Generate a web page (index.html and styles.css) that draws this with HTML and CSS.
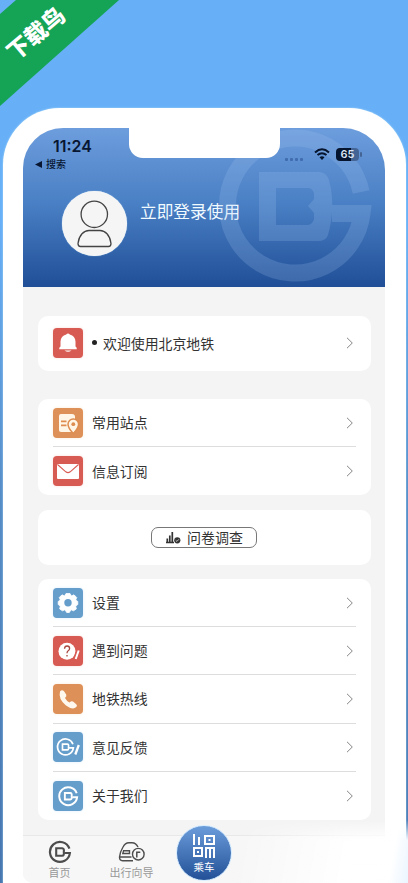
FILE: index.html
```html
<!DOCTYPE html>
<html lang="zh-CN">
<head>
<meta charset="utf-8">
<title>北京地铁</title>
<link rel="stylesheet" href="styles.css">
</head>
<body>
<svg width="0" height="0" class="defs">
  <symbol id="chev" viewBox="0 0 8 12"><path d="M1 .8 6.3 6 1 11.2" fill="none" stroke="#858585" stroke-width="1"/></symbol>
  <symbol id="metro" viewBox="0 0 24 24"><path d="M21.4 8.6A10 10 0 1 0 21.9 13H16.5" fill="none" stroke="currentColor" stroke-width="2.2"/><path d="M8.2 8.3H14.2Q16.4 8.3 15.8 12Q16.4 15.7 14.2 15.7H8.2Z" fill="none" stroke="currentColor" stroke-width="2.1"/></symbol>
</svg>
<div class="ribbon"><svg width="120" height="108"><path d="M16 0H119L0 106V14Z" fill="#15a455"/></svg><span>下载鸟</span></div>
<main class="phone">
  <div class="screen">
    <header class="hero">
      <svg class="watermark" width="156" height="154" viewBox="217 130 156 154"><path fill="none" stroke="#a6c5ef" stroke-width="17" d="M361.1 193A67.5 67.5 0 1 0 362 214.5H332"/><path fill="#a6c5ef" fill-rule="evenodd" d="M259 173H320Q327 174 329 181Q336 207 328 236Q326 242 318 242H259ZM276 189V226H308Q313 225 314 220V214L308 207 314 200V194Q312 189 308 189Z"/></svg>
      <div class="notch"></div>
      <div class="status">
        <div class="clock"><b>11:24</b><small><svg width="8" height="7"><path d="M0 3.5 7 0V7Z" fill="#081632"/></svg>搜索</small></div>
        <div class="signals"><span class="dots"><i></i><i></i><i></i><i></i></span>
          <svg width="16" height="12" viewBox="0 0 16 12"><path d="M1 4.4Q8-1.8 15 4.4M3.5 7.1Q8 3.3 12.5 7.1" fill="none" stroke="#06142d" stroke-width="2"/><path d="M5.5 9.2Q8 7.2 10.5 9.2L8 12Z" fill="#06142d"/></svg>
          <span class="battery">65</span></div>
      </div>
      <div class="profile">
        <div class="avatar"><svg width="65" height="65"><g fill="none" stroke="#444" stroke-width="1.3"><circle cx="32.3" cy="23.3" r="13.2"/><path d="M18.5 55.5Q16 55.5 16 52.5C17 44 22 39.5 27 39.5H38C43 39.5 48 44 49 52.5Q49 55.5 46.5 55.5Z"/></g></svg></div>
        <span>立即登录使用</span>
      </div>
    </header>
    <section class="card notice"><div class="row"><span class="icon red"><svg viewBox="0 0 30 30"><path d="M6.3 21.3V19.8L7.5 18.5V13.5Q7.8 8 13.2 6.6Q15 4.6 16.8 6.6Q22.2 8 22.5 13.5V18.5L23.7 19.8V21.3ZM11.5 22.4H18.5Q15 25 11.5 22.4" fill="#fff"/></svg></span><span class="label"><i class="bullet"></i>欢迎使用北京地铁</span><svg class="chev"><use href="#chev"/></svg></div></section>
    <section class="card saved">
      <div class="row"><span class="icon orange"><svg viewBox="0 0 30 30"><path d="M8 6H19Q22 6 22 9V24H8Q6 24 6 22V8Q6 6 8 6" fill="#fff6e8"/><path d="M8 13.3H13.5M8 17.3H13.5" stroke="#dd8d50" stroke-width="1.7"/><path d="M20.3 25.5Q15 20 15 16.2A5.3 5.3 0 0 1 25.6 16.2Q25.6 20 20.3 25.5Z" fill="#fff6e8" stroke="#dd8d50" stroke-width="1.5"/><circle cx="20.3" cy="16.2" r="1.9" fill="#dd8d50"/></svg></span><span class="label">常用站点</span><svg class="chev"><use href="#chev"/></svg></div>
      <div class="row"><span class="icon red"><svg viewBox="0 0 30 30"><rect x="4" y="8" width="22" height="15" rx="1" fill="#fff"/><path d="m4.5 8.5 8.3 7.3Q15 17.5 17.2 15.8L25.5 8.5" fill="none" stroke="#d85b53" stroke-width="1.1"/></svg></span><span class="label">信息订阅</span><svg class="chev"><use href="#chev"/></svg></div>
    </section>
    <section class="card survey"><div class="survey-button"><svg width="16" height="13" viewBox="0 0 16 13"><path d="M1 11.5H9M2.3 11V7.5M4.8 11V4.5M7.3 11V1" stroke="#333" stroke-width="1.7"/><circle cx="12.3" cy="9.3" r="3.1" fill="#333"/><path d="m10.7 9.3 1.2 1.1 2-2.1" stroke="#fff" fill="none" stroke-width=".7"/></svg><span>问卷调查</span></div></section>
    <section class="card services">
      <div class="row"><span class="icon blue"><svg viewBox="0 0 30 30"><path d="M13 5.5H17L18.5 8 21 6.8 23.7 9.5 22.7 12 24.8 13.5V16.5L22.7 18 23.3 21 20.5 22.8 18 21.7 16.3 24.5H13.7L12 21.7 9.5 22.8 6.7 21 7.3 18 5.2 16.5V13.5L7.3 12 6.3 9.5 9 6.8 11.5 8Z" fill="#fff" stroke="#fff" stroke-linejoin="round" stroke-width=".8"/><circle cx="15" cy="14.8" r="3.7" fill="#659dcb"/></svg></span><span class="label">设置</span><svg class="chev"><use href="#chev"/></svg></div>
      <div class="row"><span class="icon red"><svg viewBox="0 0 30 30"><circle cx="14" cy="15.2" r="8.5" fill="#fff"/><path d="M11.5 12.8Q11.7 10 14.1 10Q16.6 10 16.6 12.4Q16.6 13.8 15.2 14.7Q14 15.5 14 17.2M14 19V20.5" fill="none" stroke="#a9473e" stroke-width="1.3"/><path d="m25.8 14.5-3.4 9" stroke="#d85b53" stroke-width="5"/><path d="m25.7 14.5-3 8.5" stroke="#fff" stroke-width="2"/></svg></span><span class="label">遇到问题</span><svg class="chev"><use href="#chev"/></svg></div>
      <div class="row"><span class="icon orange"><svg viewBox="0 0 30 30"><path d="M7 7.5Q9 5 11 7.2L13.2 10.5Q14 12 12 14Q13.5 17 16.5 18.4Q18.5 16.5 20 17.5L23 20Q25 22 22.5 23.5Q19 26 13 21.5Q5 15 7 7.5" fill="#fff8ee"/></svg></span><span class="label">地铁热线</span><svg class="chev"><use href="#chev"/></svg></div>
      <div class="row"><span class="icon blue"><svg viewBox="0 0 30 30"><use href="#metro" x="3" y="5.5" width="19" height="19"/><path d="m26 13-4.2 11" stroke="#659dcb" stroke-width="4.4"/><path d="m25.8 13-3.5 9.5" stroke="#fff" stroke-width="2.3"/></svg></span><span class="label">意见反馈</span><svg class="chev"><use href="#chev"/></svg></div>
      <div class="row"><span class="icon blue"><svg viewBox="0 0 30 30"><use href="#metro" x="4.5" y="4.5" width="21.5" height="21.5"/></svg></span><span class="label">关于我们</span><svg class="chev"><use href="#chev"/></svg></div>
    </section>
    <nav class="tabs">
      <div class="tab home"><svg width="24" height="24"><use href="#metro"/></svg><span>首页</span></div>
      <div class="tab guide"><svg width="28" height="24" viewBox="0 0 28 24"><g fill="none" stroke="#4d4d4d" stroke-width="1.4"><path d="M15 20.7H4.5Q1.5 20.7 1.5 17Q2 12 5 7Q7 2.7 11 2.7H14Q18 2.7 20 7M1.8 17H13.5"/><path d="M5.6 10.8H11.5V13.5H4.8Z"/><circle cx="20.3" cy="14.2" r="5.8"/><path d="M18.8 17.5V12.3H22.3" stroke-width="1.5"/></g></svg><span>出行向导</span></div>
      <div class="ride"><svg width="24" height="25" viewBox="0 0 24 25"><g fill="none" stroke="#fff" stroke-width="2"><path d="M2 0V11M7 3V11"/><rect x="13" y="2" width="9" height="8"/><path d="M16.5 6H18.5"/><rect x="2" y="14" width="8" height="8"/><path d="M5 18H7M14 24V14H22V24M18 14V24"/></g></svg><span>乘车</span></div>
    </nav>
  </div>
</main>
<div class="glow"></div>
</body>
</html>
```
FILE: styles.css
```css
* { box-sizing: border-box; }
html { overflow: hidden; }
body {
  position: relative;
  width: 408px; height: 883px;
  margin: 0; padding: 108px 2px 0 3px;
  overflow: hidden;
  background: linear-gradient(#67aff7 0 220px, #568cc6 500px, #4776af 883px);
  font-family: "Noto Sans CJK SC", sans-serif;
}
i { font-style: normal; }
svg { display: block; flex-shrink: 0; }
.defs { position: absolute; }
.ribbon { position: absolute; left: 0; top: 0; }
.ribbon span {
  position: absolute; left: 0; top: 21px;
  width: 70px; text-align: center;
  font: 900 22.5px/23px "Noto Sans CJK SC", sans-serif;
  color: #fff; white-space: nowrap;
  transform: rotate(-40deg);
}
.phone {
  height: 775px; padding: 20px 21px 0 20px;
  background: #fff; border-radius: 57px 57px 0 0;
  box-shadow: 0 0 2px #b4e1fa;
}
.screen {
  height: 755px; overflow: hidden;
  background: #f4f4f5; border-radius: 40px 42px 0 10px;
}
.hero {
  position: relative;
  height: 159px; overflow: hidden;
  background: linear-gradient(#6d9ddd, #497fc4 48%, #204f97);
}
.watermark { position: absolute; left: 194px; top: 1px; opacity: .21; }
.notch {
  position: absolute; left: 106px; top: 0;
  width: 151px; height: 30px;
  background: #fff; border-radius: 0 0 14px 14px;
}
.status { position: relative; display: flex; justify-content: space-between; height: 63px; padding: 9px 26px 0 12px; }
.clock { display: flex; flex-direction: column; color: #081632; }
.clock b { margin-left: 18px; font: 600 15.9px/20px Inter, sans-serif; }
.clock small { display: flex; align-items: center; gap: 3px; font-size: 10px; line-height: 14px; font-weight: 500; }
.signals { display: flex; align-items: center; height: 34px; }
.dots { display: flex; gap: 2px; margin: 11px 11px 0 0; opacity: .7; }
.dots i { width: 3px; height: 3px; background: #355d9d; border-radius: 1px; }
.battery {
  position: relative;
  width: 23px; height: 13px; margin-left: 6px;
  border-radius: 4px;
  background: linear-gradient(90deg, #06142d 65%, #456496 65%);
  color: #dbe6f5; text-align: center;
  font: 600 11px/13px Inter, sans-serif;
}
.battery::after { content: ""; position: absolute; left: 24px; top: 4px; width: 1.5px; height: 5px; background: #456496; border-radius: 1px; }
.profile { display: flex; gap: 13px; padding-left: 39px; }
.avatar { width: 65px; height: 65px; background: #f5f5f5; border-radius: 50%; box-shadow: 0 0 1px #d8eeff; }
.profile > span { padding-top: 8px; color: #f1faff; font-size: 16.7px; line-height: 24px; }
.card { width: 333px; margin: 0 0 14px 15px; padding: 0 15px; background: #fff; border-radius: 10px; }
.notice { margin-top: 29px; margin-bottom: 28px; padding-top: 3px; height: 55px; }
.saved { height: 96px; margin-bottom: 15px; }
.survey { display: flex; justify-content: center; align-items: center; height: 55px; }
.survey-button {
  display: flex; justify-content: center; align-items: center; gap: 6px;
  width: 106px; height: 21px; margin-right: 1px;
  border: 1px solid #777; border-radius: 7px;
  color: #333; font-size: 14px; line-height: 18px;
}
.survey-button span { padding-bottom: 2px; }
.services { height: 241px; margin-bottom: 15px; }
.row { display: flex; align-items: center; height: 48.2px; border-bottom: 1px solid #ddd; }
.row:last-child { border: 0; }
.icon { width: 30px; height: 30px; margin-right: 9px; border-radius: 4px; color: #fff; }
.icon svg { width: 30px; height: 30px; }
.red { background: #d85b53; box-shadow: 0 0 3px #f8dedb; }
.orange { background: #dd9057; box-shadow: 0 0 3px #fbead9; }
.blue { background: #659dcb; box-shadow: 0 0 3px #dceefb; }
.label { display: flex; align-items: center; padding-bottom: 1px; color: #333; font-size: 13.9px; line-height: 22px; }
.bullet { width: 5px; height: 5px; margin-right: 6px; border-radius: 50%; background: #222; }
.chev { width: 8px; height: 12px; margin-left: auto; margin-right: 2px; }
.tabs { display: flex; height: 49px; border-top: 1px solid #e8e8e8; background: #f7f7f7; }
.tab { display: flex; flex-direction: column; align-items: center; padding-top: 4px; color: #4d4d4d; }
.tab span { color: #999; font-size: 11px; line-height: 17px; }
.home { width: 73px; }
.guide { width: 71px; }
.ride {
  display: flex; flex-direction: column; align-items: center;
  width: 56px; height: 56px; margin: -11px 0 0 9px; padding-top: 8px;
  border: 1px solid #d6edff; border-radius: 50%;
  background: linear-gradient(#6b9cda, #235097);
  color: #fff;
}
.ride span { font-size: 10.5px; line-height: 16px; }
.glow {
  position: absolute; right: 0; bottom: 0;
  width: 190px; height: 63px;
  background: linear-gradient(100deg, transparent 10%, rgba(255,255,255,.9) 65%, #fff 90%, #eaf5ff);
  -webkit-mask-image: linear-gradient(transparent, #000 20px);
  mask-image: linear-gradient(transparent, #000 20px);
}
```
